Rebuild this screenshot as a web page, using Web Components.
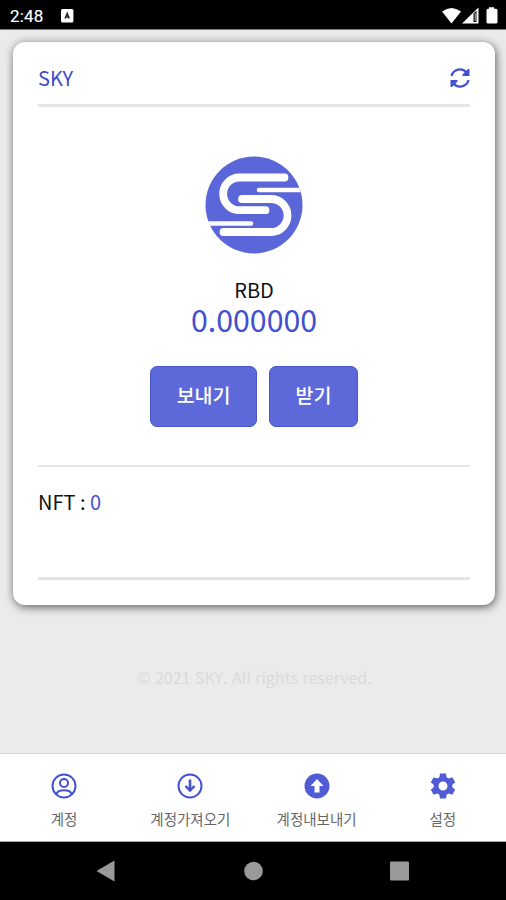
<!DOCTYPE html>
<html lang="ko">
<head>
<meta charset="utf-8">
<title>SKY</title>
<style>
html,body{margin:0;height:100%}
body{font-family:"Noto Sans CJK KR","Noto Sans",sans-serif;background:#ebebeb;color:#111;overflow:hidden}
</style>
</head>
<body>
<wallet-app></wallet-app>
<script>
function define(name, html){
  const t = document.createElement('template');
  t.innerHTML = html;
  customElements.define(name, class extends HTMLElement{
    constructor(){
      super();
      this.attachShadow({mode:'open'}).append(t.content.cloneNode(true));
    }
  });
}

define('status-bar', `
<style>
:host{display:flex;height:30px;box-sizing:border-box;background:#000;border-bottom:1px solid #777;align-items:center;padding:2px 8px 0 10px;color:#fff}
.time{font:400 17px/20px Roboto,sans-serif;letter-spacing:.2px;-webkit-text-stroke:.15px #fff}
svg{display:block}
.app{margin-left:17px}
.right{margin-left:auto}
</style>
<span class="time">2:48</span>
<svg class="app" width="13" height="14" viewBox="0 0 13 14"><rect width="12.4" height="13.4" rx="1.5" fill="#fff"/><path d="M4.100 9.500 6.200 4.500 8.300 9.500M4.900 8h2.600" fill="none" stroke="#222" stroke-width="1.5"/></svg>
<svg class="right" width="56" height="18" viewBox="0 0 56 18"><path d="M0 4.500Q9.500-2.500 19 4.500L9.500 16.500Z" fill="#fff"/><path fill-rule="evenodd" d="M20 16.500 36.500 .5V16.500ZM31.500 6.500V15H34.500V3.800Z" fill="#fff"/><path d="M33.200 6v8" stroke="#fff" stroke-width=".8"/><path d="M47 .3h5v1.500h2q1.500 0 1.500 1.500v11.700q0 1.500-1.500 1.500h-8q-1.500 0-1.500-1.500V3.300q0-1.500 1.500-1.500h1Z" fill="#fff"/></svg>
`);

define('refresh-icon', `
<style>:host{display:block}svg{display:block}</style>
<svg width="20" height="20" viewBox="0 0 20 20"><g fill="none" stroke="#4350cf" stroke-width="2.300"><path d="M1.500 8A8.600 8.600 0 0 1 16.800 5"/><path d="M18.500 12A8.600 8.600 0 0 1 3.200 15"/></g><path d="M19.500 1V8H12.500V6.500L18 1ZM.5 19V12H7.500V13.500L2 19Z" fill="#4350cf"/></svg>
`);

define('sky-logo', `
<style>:host{display:block}svg{display:block}</style>
<svg width="98" height="98" viewBox="0 0 98 98"><defs><clipPath id="disc"><circle cx="49" cy="49" r="48.500"/></clipPath></defs><circle cx="49" cy="49" r="48.500" fill="#5b66d9"/><g clip-path="url(#disc)" fill="none" stroke="#fff" stroke-linecap="round"><path d="M79.500 21.500H34.500A16.300 16.300 0 0 0 34.500 54.200H60.500" stroke-width="7.800"/><path d="M37 43H66A16.500 16.500 0 0 1 66 76H18.500" stroke-width="7.800"/><path d="M54 34H100M-2 67.500H46" stroke-width="4.600"/></g></svg>
`);

define('sky-button', `
<style>:host{display:flex;box-sizing:border-box;height:61px;padding:0 25.500px 4px;align-items:center;border-radius:7px;background:#5d69d9;border:1px solid #4b56cc;color:#fff;font-size:19.500px;font-weight:500;line-height:30px;white-space:nowrap}
</style>
<span><slot></slot></span>
`);

define('wallet-card', `
<style>
:host{display:flex;flex-direction:column;box-sizing:border-box;width:482px;height:563px;margin:12px 0 0 13px;padding:0 25px;background:#fff;border-radius:12px;box-shadow:1px 2px 10px rgba(0,0,0,.62)}
header{display:flex;height:65px;padding-top:10px;box-sizing:border-box;align-items:center;justify-content:space-between;border-bottom:3px solid #e5e5e5;color:#3f4bcb;font-size:20px;flex:none}
header span{line-height:30px;padding-bottom:1px}
main{display:flex;flex-direction:column;align-items:center;height:358px;flex:none}
sky-logo{margin-top:49px}
.coin{font-size:20px;line-height:26px;margin-top:23px;color:#111}
.amount{font-size:30.300px;line-height:36px;color:#4350cf;margin-top:-2px}
.row{display:flex;gap:12px;margin-top:29px}
.nft{box-sizing:border-box;height:115px;border:solid #e5e5e5;border-width:2px 0 3px;padding-top:20px;font-size:20px;line-height:30px;font-feature-settings:"calt" 0,"locl" 0}
.nft b{font-weight:400;color:#4350cf}
</style>
<header><span>SKY</span><refresh-icon></refresh-icon></header>
<main>
<sky-logo></sky-logo>
<div class="coin">RBD</div>
<div class="amount">0.000000</div>
<div class="row"><sky-button>보내기</sky-button><sky-button>받기</sky-button></div>
</main>
<section class="nft" lang="en">NFT : <b>0</b></section>
`);

define('nav-item', `
<style>:host{display:flex;flex:1 1 0;flex-direction:column;align-items:center;padding-top:19px;font-size:14.500px;line-height:20px;color:#666;white-space:nowrap}
.label{margin-top:10px}</style>
<slot name="icon"></slot><span class="label"><slot></slot></span>
`);

define('tab-bar', `
<style>:host{display:flex;box-sizing:border-box;height:89px;padding-left:1px;background:#fff;border-top:1px solid #d4d4d4;border-bottom:1px solid #aaa}
svg{display:block}</style>
<nav-item><svg slot="icon" width="26" height="26" viewBox="0 0 26 26" fill="none" stroke="#4350cf" stroke-width="2"><circle cx="13" cy="13" r="11.500"/><circle cx="13" cy="10" r="4"/><path d="M5.500 21C7 16 19 16 20.500 21"/></svg>계정</nav-item>
<nav-item><svg slot="icon" width="26" height="26" viewBox="0 0 26 26" fill="none" stroke="#4350cf" stroke-width="2"><circle cx="13" cy="13" r="11.500"/><path d="M13 6.500V17" stroke-width="2.600"/><path d="M8.500 13 13 17.500 17.500 13" stroke-width="2.400"/></svg>계정가져오기</nav-item>
<nav-item><svg slot="icon" width="26" height="26" viewBox="0 0 26 26"><circle cx="13" cy="13" r="12.500" fill="#505bd4"/><path d="M13 6 19.500 13H15.500V19.500H10.500V13H6.500Z" fill="#fff"/></svg>계정내보내기</nav-item>
<nav-item><svg slot="icon" width="26" height="26" viewBox="0 0 26 26"><path fill="#505bd4" fill-rule="evenodd" d="M10 .6H16L16.600 4.200 18.800 5.500 22.300 4.200 25.200 9.300 22.300 11.700V14.300L25.200 16.700 22.300 21.800 18.800 20.500 16.600 21.800 16 25.400H10L9.400 21.800 7.200 20.500 3.700 21.800.8 16.700 3.700 14.300V11.700L.8 9.300 3.700 4.200 7.200 5.500 9.400 4.200ZM13 8.500A4.500 4.500 0 1 0 13 17.500A4.500 4.500 0 1 0 13 8.500Z"/></svg>설정</nav-item>
`);

define('system-nav', `
<style>:host{display:flex;height:58px;background:#000;align-items:center;justify-content:space-between;padding:0 96px}
svg{display:block}</style>
<svg width="20" height="22" viewBox="0 0 20 22"><path d="M.5 11 18.500.5V21.500Z" fill="#999"/></svg>
<svg width="20" height="20" viewBox="0 0 20 20"><circle cx="10.500" cy="10" r="9.300" fill="#999"/></svg>
<svg width="20" height="20" viewBox="0 0 20 20"><rect x="0" y=".5" width="19" height="19" rx="1" fill="#999"/></svg>
`);

define('wallet-app', `
<style>:host{display:flex;flex-direction:column;width:506px;height:900px;background:#ebebeb}
status-bar,wallet-card,tab-bar,system-nav{flex:none}
footer{flex:1;padding:60px 0 0 3px;text-align:center;font-size:16px;line-height:24px;color:#dadada}</style>
<status-bar></status-bar><wallet-card></wallet-card>
<footer>© 2021 SKY. All rights reserved.</footer>
<tab-bar></tab-bar><system-nav></system-nav>
`);
</script>
</body>
</html>
